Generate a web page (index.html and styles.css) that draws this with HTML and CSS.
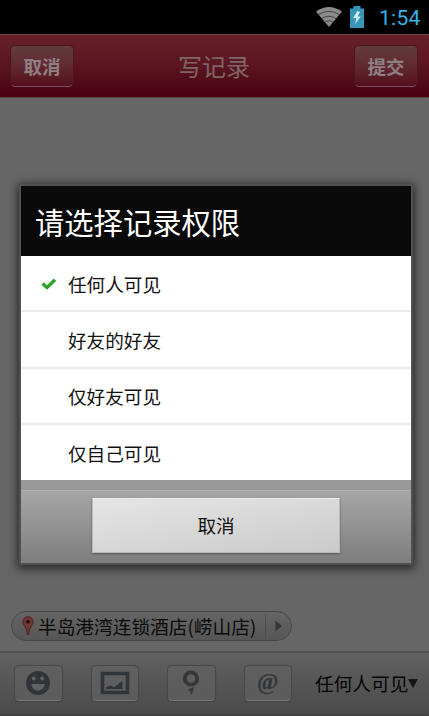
FILE: index.html
```html
<!DOCTYPE html>
<html lang="zh-CN">
<head>
<meta charset="utf-8">
<title>写记录</title>
<link rel="stylesheet" href="styles.css">
</head>
<body>
<div class="screen">
  <div class="status">
    <svg class="wifi" width="28" height="22" viewBox="0 0 28 22"><path d="M1 5.5Q14-3.5 27 5.5L14 21z" fill="#8c8c8c"/><path d="M3 9Q14 1.5 25 9M6 13Q14 7.5 22 13M9 16.7Q14 13 19 16.7" fill="none" stroke="#000" stroke-width="1" opacity=".5"/></svg>
    <svg class="battery" width="14" height="22" viewBox="0 0 14 22"><path d="M3.500 0h7v2.500H14V22H0V2.500h3.500z" fill="#3795b8"/><path d="M7.500 5 3 12h3.500L5 18l5.800-7.500H7.500L10 6z" fill="#d8edf3"/></svg>
    <span class="time">1:54</span>
  </div>
  <header class="header">
    <button class="nav">取消</button>
    <h1>写记录</h1>
    <button class="nav">提交</button>
  </header>
  <main class="editor">
    <div class="place">
      <svg class="pin" width="12" height="20" viewBox="0 0 12 20"><path d="M6 .6A5.200 5.200 0 0 0 .8 5.800C.8 9 5 11 5.300 18.500h1.400C7 11 11.200 9 11.200 5.800A5.200 5.200 0 0 0 6 .6z" fill="#713633" stroke="#3d1e1d" stroke-width=".8"/><circle cx="6" cy="5.800" r="1.800" fill="#170b0b"/></svg>
      <span class="place-name">半岛港湾连锁酒店(崂山店)</span>
      <span class="place-more"><svg width="8" height="12" viewBox="0 0 8 12"><path d="M.5.5 7 6 .5 11.500z" fill="#353535"/></svg></span>
    </div>
  </main>
  <footer class="toolbar">
    <button class="tool"><svg width="26" height="26" viewBox="0 0 26 26"><circle cx="13" cy="13" r="12" fill="#31353a"/><circle cx="8.800" cy="8.500" r="2" fill="#606163"/><circle cx="17.200" cy="8.500" r="2" fill="#606163"/><path d="M6.500 14h13c0 4-3 6.500-6.500 6.500S6.500 18 6.500 14z" fill="#606163"/></svg></button>
    <button class="tool"><svg width="30" height="24" viewBox="0 0 30 24"><path d="M2.500 2.500h25v19h-25z" fill="none" stroke="#31353a" stroke-width="3.600"/><path d="M6 18v-1.500l4-2 4 1.500 8.500-6V18z" fill="#31353a"/></svg></button>
    <button class="tool"><svg width="18" height="26" viewBox="0 0 18 26"><circle cx="9" cy="8.500" r="6.200" fill="none" stroke="#34373b" stroke-width="3.800"/><path d="M5.500 19.500 12 17l-1 4.500-2 3.500-.8-3.800z" fill="#34373b"/></svg></button>
    <button class="tool at">@</button>
    <span class="scope">任何人可见<svg width="10" height="9" viewBox="0 0 10 9"><path d="M0 0h10L5 9z" fill="#171717"/></svg></span>
  </footer>
  <section class="dialog">
    <h2>请选择记录权限</h2>
    <ul>
      <li><svg width="16" height="12" viewBox="0 0 16 12"><path d="m1.500 5.500 4.500 4L14 1.800" fill="none" stroke="#2ba12e" stroke-width="3.400"/></svg>任何人可见</li>
      <li>好友的好友</li>
      <li>仅好友可见</li>
      <li>仅自己可见</li>
    </ul>
    <div class="actions"><button class="cancel">取消</button></div>
  </section>
</div>
</body>
</html>
```
FILE: styles.css
```css
* { box-sizing: border-box; }
body {
  margin: 0;
  font-family: "Noto Sans CJK SC", sans-serif;
}
button {
  padding: 0;
  margin: 0;
  font-family: inherit;
}
svg { display: block; flex: none; }
.screen {
  position: relative;
  width: 429px;
  height: 716px;
  display: flex;
  flex-direction: column;
  overflow: hidden;
  background: #666;
}
.status {
  height: 34px;
  flex: none;
  display: flex;
  align-items: center;
  justify-content: flex-end;
  padding-right: 8px;
  background: #000;
}
.battery { margin: 0 15px 0 7px; }
.time {
  width: 42px;
  padding-top: 1px;
  color: #33b5e5;
  font: 21px/34px Roboto, sans-serif;
  letter-spacing: .3px;
  white-space: nowrap;
}
.header {
  height: 64px;
  flex: none;
  display: flex;
  align-items: center;
  justify-content: space-between;
  padding: 0 11px 0 10px;
  border-top: 1px solid #79404a;
  border-bottom: 1px solid #5a4548;
  background: linear-gradient(#66202a, #5a1520 50%, #490010);
}
.header h1 {
  margin: 0 0 1px;
  font-size: 24px;
  font-weight: 400;
  line-height: 36px;
  color: #7e6668;
}
.nav {
  width: 64px;
  height: 42px;
  border: 1px solid #4c1720;
  border-bottom-color: #79505a;
  border-radius: 5px;
  background: linear-gradient(#633b3d, #602a30 50%, #550f1c);
  color: #8f8083;
  font-size: 18.5px;
  font-weight: 700;
  line-height: 36px;
}
.editor {
  flex: 1;
  display: flex;
  align-items: flex-end;
  padding: 0 11px 10px;
}
.place {
  width: 281px;
  height: 30px;
  display: flex;
  align-items: center;
  padding-left: 10px;
  border: 1px solid #484848;
  border-radius: 15px;
  background: linear-gradient(#656565, #565656);
  color: #0b0b0b;
}
.place-name {
  width: 227px;
  margin-left: 4px;
  font-size: 18.7px;
  line-height: 28px;
  white-space: nowrap;
}
.place-more {
  height: 22px;
  display: flex;
  align-items: center;
  padding-left: 9px;
  border-left: 1px solid #4b4b4b;
}
.toolbar {
  height: 65px;
  flex: none;
  display: flex;
  align-items: center;
  gap: 28px;
  padding: 0 10px 1px 14px;
  border-top: 2px solid #505050;
  border-bottom: 2px solid #434343;
  background: linear-gradient(#606060, #4b4b4b);
}
.tool {
  width: 48.5px;
  height: 36px;
  flex: none;
  display: flex;
  align-items: center;
  justify-content: center;
  border: 1px solid #494949;
  border-bottom-color: #777;
  border-radius: 5px;
  background: linear-gradient(#606060, #5b5b5b);
  box-shadow: 0 1px 1px #444;
}
.at {
  padding-bottom: 3px;
  color: #303438;
  font: 700 23px/30px "Liberation Serif", serif;
}
.scope {
  display: flex;
  align-items: center;
  margin-left: -5px;
  font-size: 18.7px;
  line-height: 30px;
  color: #050505;
  white-space: nowrap;
}
.dialog {
  position: absolute;
  left: 19px;
  top: 184px;
  width: 394px;
  height: 381px;
  border: 2px solid #515151;
  border-radius: 2px;
  background: #999;
  box-shadow: 0 2px 10px 2px rgba(0, 0, 0, .6);
}
.dialog h2 {
  height: 70px;
  margin: 0;
  padding-left: 14px;
  background: #0a0a0a;
  color: #fff;
  font-size: 29.3px;
  font-weight: 400;
  line-height: 71px;
}
.dialog ul {
  margin: 0;
  padding: 0;
  list-style: none;
}
.dialog li {
  height: 56.3px;
  display: flex;
  align-items: center;
  padding: 1px 0 0 47px;
  border-bottom: 2px solid #ebebeb;
  background: #fff;
  color: #111;
  font-size: 18.6px;
  line-height: 54px;
}
.dialog li:last-child {
  height: 55.1px;
  border-bottom: 0;
}
.dialog li svg { margin: 0 11px 0 -27px; }
.actions {
  height: 73px;
  margin-top: 10px;
  padding-top: 7px;
  border-top: 1px solid #b2b2b2;
  background: linear-gradient(#a6a6a6, #7d7d7d);
}
.cancel {
  display: block;
  width: 248px;
  height: 55px;
  margin: 0 0 0 71px;
  border: 1px solid #bbb;
  border-top-color: #ededed;
  border-radius: 1px;
  background: linear-gradient(170deg, #e5e5e5, #cbcbcb);
  box-shadow: 0 1px 2px #555;
  color: #111;
  font-size: 18.6px;
  line-height: 52px;
}
```
